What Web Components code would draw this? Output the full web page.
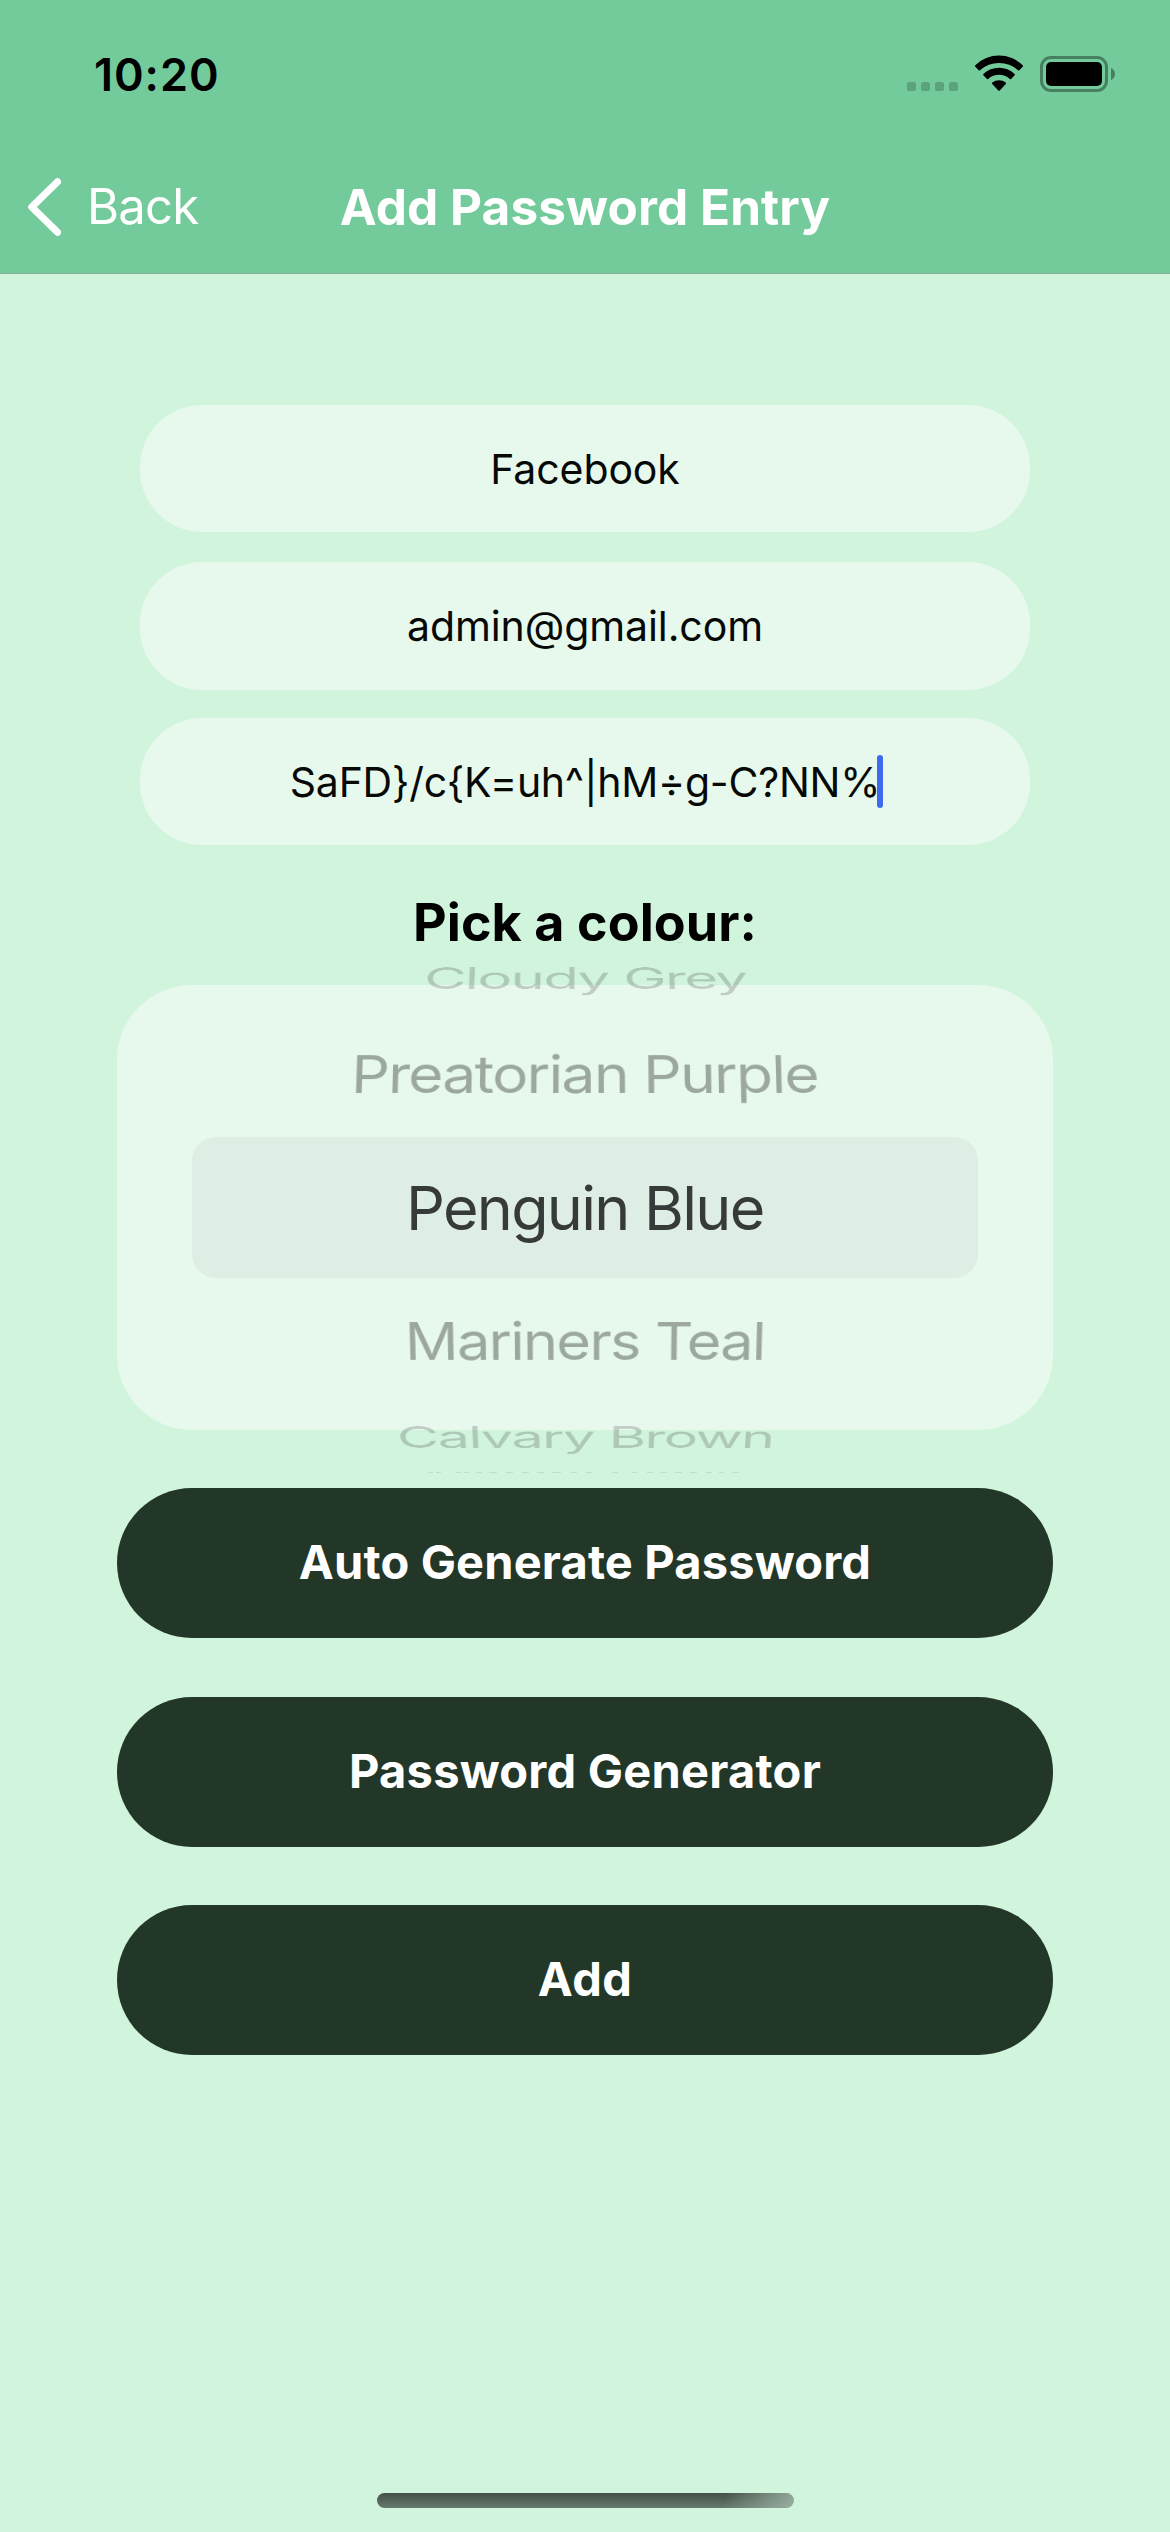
<!DOCTYPE html>
<html lang="en">
<head>
<meta charset="utf-8">
<title>Add Password Entry</title>
<style>
  html, body { margin: 0; padding: 0; background: #d1f4dd; }
  body { width: 1170px; height: 2532px; overflow: hidden; font-family: Inter, "Liberation Sans", sans-serif; }
</style>
</head>
<body>
<app-screen>
  <status-bar slot="header" time="10:20"></status-bar>
  <nav-bar slot="header" back="Back">Add Password Entry</nav-bar>
  <text-pill>Facebook</text-pill>
  <text-pill class="second">admin@gmail.com</text-pill>
  <text-pill focused>SaFD}/c{K=uh^|hM÷g-C?NN%</text-pill>
  <section-title>Pick a colour:</section-title>
  <colour-picker>
    <picker-edge side="top"></picker-edge>
    <picker-row level="far" side="top" style="--sx:.951">Cloudy Grey</picker-row>
    <picker-row level="near" side="top" style="--sx:.99">Preatorian Purple</picker-row>
    <picker-row level="selected">Penguin Blue</picker-row>
    <picker-row level="near" side="bottom" style="--sx:.974">Mariners Teal</picker-row>
    <picker-row level="far" side="bottom" style="--sx:.945">Calvary Brown</picker-row>
    <picker-edge side="bottom"></picker-edge>
  </colour-picker>
  <action-button style="--track:.16px">Auto Generate Password</action-button>
  <action-button style="--track:.24px">Password Generator</action-button>
  <action-button style="--track:.4px">Add</action-button>
  <home-indicator slot="footer"></home-indicator>
</app-screen>

<script>
const define = (name, html, setup) => {
  const tpl = document.createElement('template');
  tpl.innerHTML = html;
  customElements.define(name, class extends HTMLElement {
    constructor() {
      super();
      this.attachShadow({ mode: 'open' }).append(tpl.content.cloneNode(true));
    }
    connectedCallback() { if (setup) setup(this, this.shadowRoot); }
  });
};

define('app-screen', `
  <style>
    :host { display: flex; flex-direction: column; width: 1170px; height: 2532px; background: #d1f4dd; }
    header { background: #73cb9b; border-bottom: 1px solid #80b394; }
    main { flex: 1; display: flex; flex-direction: column; align-items: center; padding-top: 131px; }
    ::slotted(text-pill) { margin-bottom: 30px; }
    ::slotted(text-pill.second) { margin-bottom: 28px; }
    ::slotted(text-pill[focused]) { margin-bottom: 0; }
    ::slotted(action-button) { margin-bottom: 58.5px; }
  </style>
  <header><slot name="header"></slot></header>
  <main><slot></slot></main>
  <slot name="footer"></slot>`);

define('status-bar', `
  <style>
    :host { display: flex; justify-content: space-between; height: 93px; padding: 48px 55px 0 94px; }
    .time { height: 53px; line-height: 53px; font-size: 45px; font-weight: 600; letter-spacing: .95px; color: #000; }
    .icons { display: flex; align-items: flex-start; }
    svg { display: block; }
  </style>
  <span class="time"></span>
  <div class="icons">
    <svg width="208" height="52" viewBox="907 48 208 52">
      <g fill="#5ca27c">
        <rect x="907" y="82" width="9" height="9" rx="2.6"/><rect x="921" y="82" width="9" height="9" rx="2.6"/>
        <rect x="935" y="82" width="9" height="9" rx="2.6"/><rect x="949" y="82" width="9" height="9" rx="2.6"/>
      </g>
      <path d="M975.3 65.2A34 34 0 0 1 1022.700 65.200Q1023.400 66 1022.700 66.700L1019.300 70.200Q1018.700 70.800 1018 70.200A28.500 28.500 0 0 0 980 70.200Q979.300 70.800 978.700 70.200L975.300 66.700Q974.600 66 975.300 65.200Z"/>
      <path d="M983.400 73.900A22.600 22.600 0 0 1 1014.600 73.900Q1015.300 74.600 1014.600 75.300L1011.100 78.900Q1010.500 79.500 1009.800 78.900A16.500 16.500 0 0 0 988.200 78.900Q987.500 79.500 986.900 78.900L983.400 75.300Q982.700 74.600 983.400 73.900Z"/>
      <path d="M992.300 82.600A10.400 10.400 0 0 1 1005.700 82.600Q1006.500 83.300 1005.800 84L999.700 90.500Q999 91.100 998.300 90.500L992.200 84Q991.500 83.300 992.300 82.600Z"/>
      <rect x="1041.500" y="57.500" width="65" height="33" rx="9.500" fill="none" stroke="#477f61" stroke-width="3"/>
      <rect x="1046" y="62" width="56" height="24" rx="5"/>
      <path d="M1111 68C1113.600 69 1115 71.400 1115 74S1113.600 79 1111 80Z" fill="#477f61"/>
    </svg>
  </div>`, (el, root) => { root.querySelector('.time').textContent = el.getAttribute('time'); });

define('nav-bar', `
  <style>
    :host { display: grid; grid-template-columns: 1fr auto 1fr; align-items: center; height: 132px; color: #fff; font-size: 49px; line-height: 60px; }
    .back { display: flex; align-items: center; padding-left: 28px; gap: 26px; letter-spacing: -.8px; }
    .title { font-weight: 700; font-size: 49.500px; letter-spacing: .08px; }
    svg { display: block; }
  </style>
  <div class="back">
    <svg width="33" height="58" viewBox="0 0 33 58"><path d="M29.500 3.800L3.800 29.000L29.500 54.200" fill="none" stroke="#fff" stroke-width="7.200" stroke-linecap="round" stroke-linejoin="round"/></svg>
    <span class="label"></span>
  </div>
  <div class="title"><slot></slot></div>`, (el, root) => { root.querySelector('.label').textContent = el.getAttribute('back'); });

define('text-pill', `
  <style>
    :host { display: flex; align-items: center; justify-content: center; width: 890px; height: 127px; border-radius: 62px; background: #e7f9ed; color: #070907; font-size: 41px; line-height: 50px; letter-spacing: -.1px; }
    :host([focused]) { letter-spacing: -.25px; }
    .caret { display: none; width: 6px; height: 53px; margin: 0 -3px; border-radius: 3px; background: #4169f0; }
    :host([focused]) .caret { display: block; }
    :host(.second) { height: 128px; }
  </style>
  <span><slot></slot></span><i class="caret"></i>`);

define('section-title', `
  <style>
    :host { display: flex; align-items: center; justify-content: center; height: 140px; color: #000; font-size: 52px; font-weight: 700; line-height: 60px; letter-spacing: .1px; }
    span { padding-top: 16px; }
  </style>
  <span><slot></slot></span>`);

define('colour-picker', `
  <style>
    :host { display: flex; flex-direction: column; align-items: center; justify-content: center; width: 936px; height: 445px; margin-bottom: 58px; border-radius: 75px; background: #e7f9ed; }
  </style>
  <slot></slot>`);

define('picker-row', `
  <style>
    :host { flex: none; display: flex; align-items: center; justify-content: center; width: 786px; box-sizing: border-box; font-size: 61px; line-height: 74px; letter-spacing: -1.700px; white-space: nowrap; }
    span { display: block; transform: scale(var(--sx, 1), var(--sy, 1)) perspective(3800px) rotateX(var(--tilt, 0deg)); }
    :host([level=selected]) { height: 141px; border-radius: 24px; background: #dfeee5; color: #363a38; --sy: 1; }
    :host([level=near]) { height: 126px; color: rgba(10, 10, 10, .34); --sy: .98; --tilt: 29deg; }
    :host([level=far]) { height: 66px; color: rgba(35, 25, 35, .2); --sy: .8; --tilt: 52deg; }
    :host([level=near][side=bottom]) { --tilt: -29deg; }
    :host([level=far][side=bottom]) { --tilt: -52deg; }
  </style>
  <span><slot></slot></span>`);

define('picker-edge', `
  <style>
    :host { flex: none; display: flex; height: 4px; width: 786px; justify-content: center; }
    svg { display: block; width: 786px; height: 4px; overflow: visible; }
    path { stroke: #c0dfca; stroke-width: 1; fill: none; }
    .top, .bottom { display: none; }
    :host([side=top]) .top, :host([side=bottom]) .bottom { display: inline; }
  </style>
  <svg viewBox="192 1470 786 4">
    <path class="top" d="M677 1471.500h5"/>
    <path class="bottom" d="M428 1472.500h5m3 0h5m15 0h5m3 0h5m7 0h6m7 0h8m9 0h7m9 0h7m8 0h7m8 0h9m10 0h6m9 0h6m20 0h6m14 0h5m10 0h6m7 0h7m8 0h7m8 0h7m9 0h6m7 0h5m8 0h7"/>
  </svg>`);

define('action-button', `
  <style>
    :host { display: block; }
    button { display: flex; align-items: center; justify-content: center; width: 936px; height: 150px; margin: 0; padding: 0 0 2px; border: 0; border-radius: 75px; background: #223727; color: #fff; font: 700 47px/56px Inter, "Liberation Sans", sans-serif; letter-spacing: var(--track, 1px); }
  </style>
  <button type="button"><slot></slot></button>`);

define('home-indicator', `
  <style>
    :host { display: flex; justify-content: center; padding-bottom: 24px; }
    div { width: 417px; height: 15px; border-radius: 7.500px; background: linear-gradient(100deg, rgba(160,184,168,0) 83%, rgba(160,184,168,.85) 100%), linear-gradient(#435047, #67796d); }
  </style>
  <div></div>`);
</script>
</body>
</html>
